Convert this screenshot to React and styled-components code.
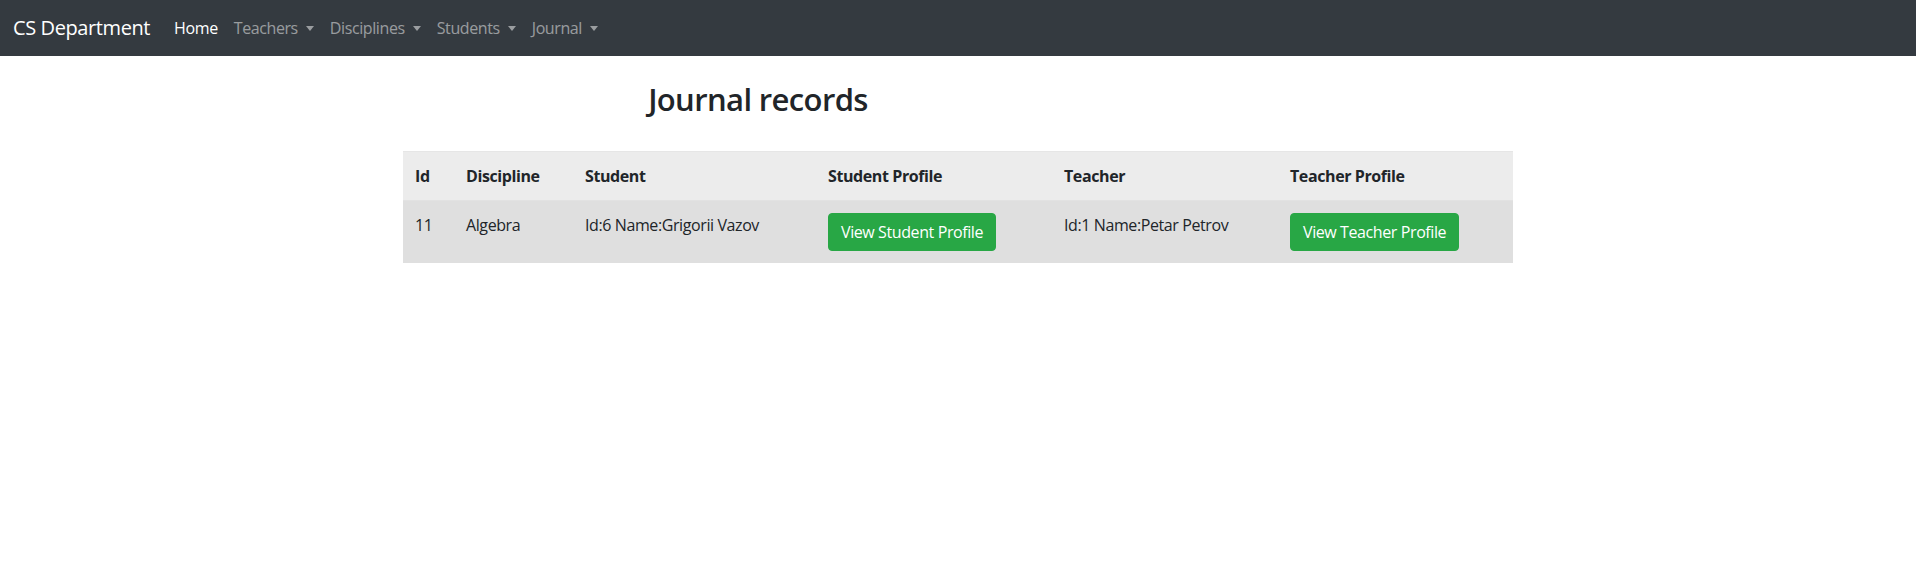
import React from 'react';
import styled, { createGlobalStyle } from 'styled-components';

const GlobalStyle = createGlobalStyle`
  html, body {
    margin: 0;
    padding: 0;
    background: #fff;
  }
  body {
    font-family: "Segoe UI", "Open Sans", "Noto Sans", Arial, sans-serif;
    font-size: 16px;
    line-height: 1.5;
    letter-spacing: -0.025em;
    color: #212529;
  }
  * {
    box-sizing: border-box;
  }
`;

const Navbar = styled.nav`
  background-color: #343a40;
  height: 56px;
  padding: 8px 13px;
  display: flex;
  align-items: center;
`;

const Brand = styled.a`
  color: #fff;
  font-size: 20px;
  line-height: 30px;
  padding: 5px 0;
  margin-right: 16px;
  white-space: nowrap;
  cursor: pointer;
`;

const NavList = styled.ul`
  display: flex;
  list-style: none;
  margin: 0;
  padding: 0;
`;

const NavLink = styled.a`
  display: flex;
  align-items: center;
  padding: 8px;
  color: ${(p) => (p.$active ? '#fff' : 'rgba(255, 255, 255, 0.5)')};
  white-space: nowrap;
  cursor: pointer;

  &:hover {
    color: rgba(255, 255, 255, 0.75);
  }
`;

const Caret = styled.span`
  display: inline-block;
  margin-left: 8px;
  margin-top: 1px;
  border-top: 5px solid;
  border-right: 4.5px solid transparent;
  border-left: 4.5px solid transparent;
  border-bottom: 0;
`;

const Container = styled.main`
  width: 1110px;
  margin: 0 auto;
`;

const Title = styled.h2`
  width: 710px;
  margin: 24px 0 32px;
  font-size: 31px;
  font-weight: 600;
  line-height: 1.25;
  letter-spacing: -0.02em;
  text-align: center;
  color: #212529;
`;

const Table = styled.table`
  width: 100%;
  border-collapse: collapse;
  table-layout: fixed;
  color: #212529;
`;

const HeadRow = styled.tr`
  background-color: #ececec;
`;

const BodyRow = styled.tr`
  background-color: #dfdfdf;
`;

const Th = styled.th`
  padding: 12px;
  text-align: left;
  font-weight: 700;
  vertical-align: bottom;
  border-top: 1px solid #e6e6e6;
  white-space: nowrap;
`;

const Td = styled.td`
  padding: 12px;
  vertical-align: top;
  border-top: 1px solid #e2e2e2;
  white-space: nowrap;
`;

const Button = styled.button`
  display: inline-block;
  font-family: inherit;
  font-size: 16px;
  line-height: 24px;
  letter-spacing: inherit;
  padding: 6px 12px;
  color: #fff;
  background-color: #28a745;
  border: 1px solid #28a745;
  border-radius: 4px;
  cursor: pointer;
  white-space: nowrap;

  &:hover {
    background-color: #218838;
    border-color: #1e7e34;
  }
`;

const navItems = [
  { label: 'Home', active: true },
  { label: 'Teachers', dropdown: true },
  { label: 'Disciplines', dropdown: true },
  { label: 'Students', dropdown: true },
  { label: 'Journal', dropdown: true },
];

const columns = [
  { label: 'Id', width: 51 },
  { label: 'Discipline', width: 119 },
  { label: 'Student', width: 243 },
  { label: 'Student Profile', width: 236 },
  { label: 'Teacher', width: 226 },
  { label: 'Teacher Profile', width: 235 },
];

const records = [
  {
    id: 11,
    discipline: 'Algebra',
    student: { id: 6, name: 'Grigorii Vazov' },
    teacher: { id: 1, name: 'Petar Petrov' },
  },
];

const App = () => {
  return (
    <>
      <GlobalStyle />
      <Navbar>
        <Brand>CS Department</Brand>
        <NavList>
          {navItems.map((item) => (
            <li key={item.label}>
              <NavLink $active={item.active}>
                {item.label}
                {item.dropdown && <Caret />}
              </NavLink>
            </li>
          ))}
        </NavList>
      </Navbar>

      <Container>
        <Title>Journal records</Title>
        <Table>
          <colgroup>
            {columns.map((col) => (
              <col key={col.label} style={{ width: col.width }} />
            ))}
          </colgroup>
          <thead>
            <HeadRow>
              {columns.map((col) => (
                <Th key={col.label}>{col.label}</Th>
              ))}
            </HeadRow>
          </thead>
          <tbody>
            {records.map((r) => (
              <BodyRow key={r.id}>
                <Td>{r.id}</Td>
                <Td>{r.discipline}</Td>
                <Td>Id:{r.student.id} Name:{r.student.name}</Td>
                <Td>
                  <Button>View Student Profile</Button>
                </Td>
                <Td>Id:{r.teacher.id} Name:{r.teacher.name}</Td>
                <Td>
                  <Button>View Teacher Profile</Button>
                </Td>
              </BodyRow>
            ))}
          </tbody>
        </Table>
      </Container>
    </>
  );
};

export default App;
